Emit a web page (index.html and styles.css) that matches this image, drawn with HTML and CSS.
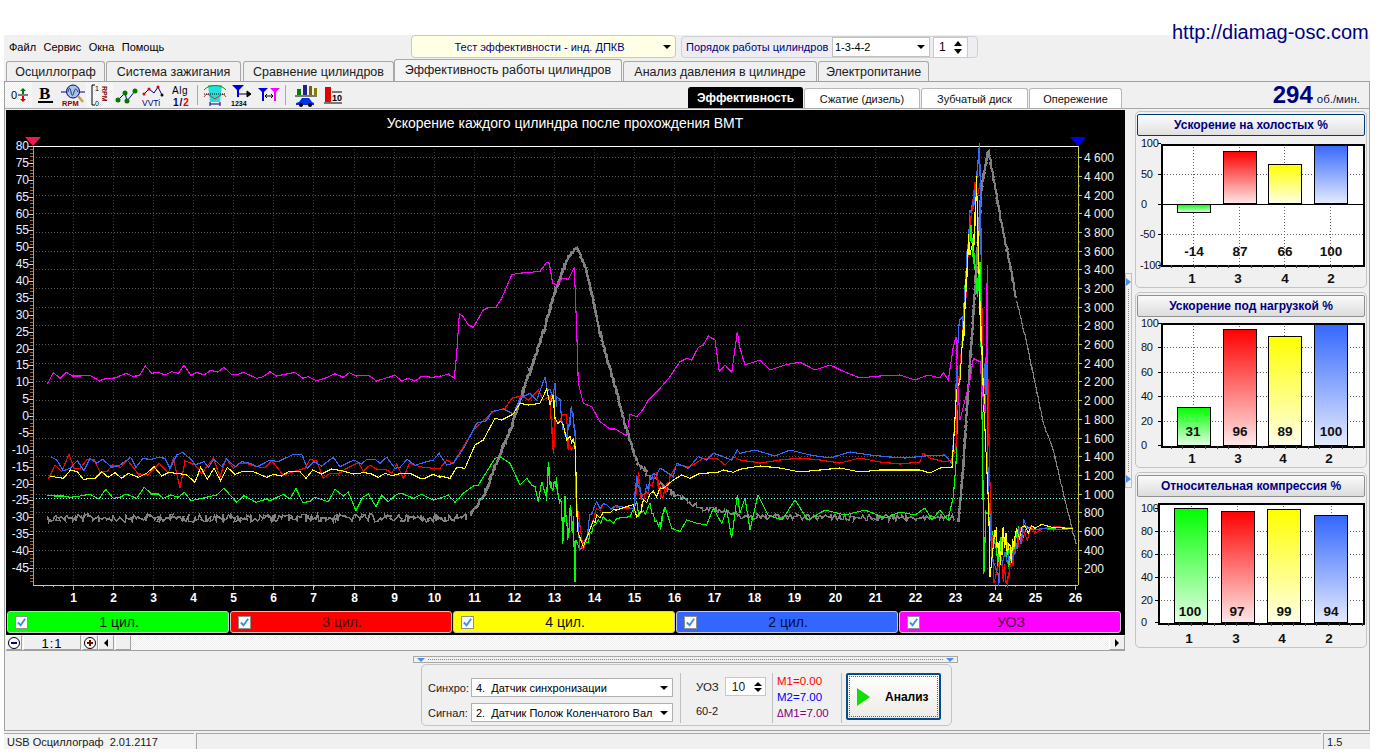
FILE: index.html
```html
<!DOCTYPE html>
<html lang="ru">
<head>
<meta charset="utf-8">
<title>USB Осциллограф</title>
<link rel="stylesheet" href="styles.css">
</head>
<body>
<div class="url">http://diamag-osc.com</div>
<div class="app">
  <div class="topbar">
    <nav class="menu"><span>Файл</span><span>Сервис</span><span>Окна</span><span>Помощь</span></nav>
    <div class="combo combo-test"><span class="combo-text">Тест эффективности - инд. ДПКВ</span><i class="caret"></i></div>
    <div class="order">
      <span class="order-label">Порядок работы цилиндров</span>
      <div class="combo combo-order"><span>1-3-4-2</span><i class="caret"></i></div>
      <div class="spin spin-order"><span>1</span><span class="spin-arrows"><i class="up"></i><i class="down"></i></span></div>
    </div>
  </div>
  <div class="tabs">
    <div class="tab t1">Осциллограф</div>
    <div class="tab t2">Система зажигания</div>
    <div class="tab t3">Сравнение цилиндров</div>
    <div class="tab t4 active">Эффективность работы цилиндров</div>
    <div class="tab t5">Анализ давления в цилиндре</div>
    <div class="tab t6">Электропитание</div>
  </div>
  <div class="panel">
    <div class="toolbar">
      <div class="tools">
        <button class="tool pressed"><svg viewBox="0 0 24 24"><text class="i-0" x="4" y="16">0</text><path d="M11 12h10" stroke="#000" fill="none"/><path d="M16 5l-3 3h2v3h2V8h2z" fill="#007a00"/><path d="M16 19l-3-3h2v-3h2v3h2z" fill="#e00000"/></svg></button>
        <button class="tool"><svg viewBox="0 0 24 24"><text class="i-b" x="5" y="16">B</text><rect x="4" y="18" width="15" height="2" fill="#000"/></svg></button>
        <button class="tool"><svg viewBox="0 0 24 24"><path d="M0 9h24" stroke="#000080" fill="none"/><circle cx="12" cy="8.500" r="6.500" fill="#a8c4e4" stroke="#000080"/><path d="M7 9c1-5 2-5 3 0s2 4 3 0 2-4 4 0" stroke="#203080" fill="none"/><path d="M17 13l5 6" stroke="#c8a050" stroke-width="2.500" fill="none"/><text class="i-rpm" x="1" y="23">RPM</text></svg></button>
        <button class="tool pressed"><svg viewBox="0 0 24 24"><path d="M7 2H4v20h3" stroke="#000" fill="none"/><text class="i-s" x="7" y="8">1</text><text class="i-s" x="7" y="23">0</text><text class="i-rpmv" transform="translate(14 3) rotate(90)">RPM</text></svg></button>
        <button class="tool"><svg viewBox="0 0 24 24"><path d="M3 17l7-7 2 8 8-10" stroke="#000080" fill="none"/><g fill="#007a00"><circle cx="3" cy="17" r="2.500"/><circle cx="10" cy="10" r="2.500"/><circle cx="12" cy="18" r="2.500"/><circle cx="20" cy="8" r="2.500"/></g></svg></button>
        <button class="tool"><svg viewBox="0 0 24 24"><path d="M2 11l5-5 5 4 4-6 4 8" stroke="#000080" fill="none"/><g fill="#e00000"><circle cx="2" cy="11" r="1.500"/><circle cx="7" cy="6" r="1.500"/><circle cx="16" cy="4" r="1.500"/></g><circle cx="20" cy="12" r="1.500" fill="#000"/><text class="i-vv" x="0" y="23">VVTi</text></svg></button>
        <button class="tool"><svg viewBox="0 0 24 24"><text class="i-alg" x="3" y="11">Alg</text><text class="i-frac" x="4" y="23">1/<tspan class="red">2</tspan></text></svg></button>
        <span class="tool-sep"></span>
        <button class="tool"><svg viewBox="0 0 24 24"><path d="M5 2h14l-2 17H7z" fill="#20e0e0"/><path d="M1 7c5-6 17-6 22 0" stroke="#00a000" fill="none"/><path d="M1 14c3-5 5-2 11 2 6-4 8-7 11-2" stroke="#e02020" fill="none"/><path d="M1 11h22" stroke="#000" stroke-dasharray="1 1" fill="none"/><path d="M7 21h10M7 19v4M17 19v4" stroke="#000080" fill="none"/></svg></button>
        <button class="tool"><svg viewBox="0 0 24 24"><path d="M2 2h12l-5 5v7H7V7z" fill="#0000e0"/><path d="M9 11h11M17 8l4 3-4 3z" stroke="#000" fill="#000"/><text class="i-num" x="1" y="23">1234</text></svg></button>
        <button class="tool"><svg viewBox="0 0 24 24"><path d="M1 5h10L7 9v9H5V9z" fill="#0000e0"/><path d="M13 5h10l-4 4v9h-2V9z" fill="#ff00ff"/><path d="M8 13h8M8 13l2-2M8 13l2 2M16 13l-2-2M16 13l-2 2" stroke="#000" fill="none"/></svg></button>
        <span class="tool-sep sep2"></span>
        <button class="tool"><svg viewBox="0 0 24 24"><rect x="3" y="6" width="4" height="6" fill="#008000"/><rect x="9" y="2" width="4" height="10" fill="#202090"/><rect x="15" y="3" width="3" height="9" fill="#806000"/><rect x="20" y="5" width="3" height="7" fill="#808000"/><path d="M1 13h22" stroke="#000" fill="none"/><path d="M2 20l3-1 3-4h7l3 4 2 1v2H2z" fill="#0030e0"/><circle cx="7" cy="22" r="2" fill="#000"/><circle cx="16" cy="22" r="2" fill="#000"/></svg></button>
        <button class="tool"><svg viewBox="0 0 24 24"><rect x="4" y="4" width="6" height="15" fill="#e00000"/><path d="M3 20h18M11 9h10" stroke="#000" fill="none"/><text class="i-ten" x="11" y="18">10</text></svg></button>
      </div>
      <div class="subtabs">
        <div class="subtab s1 active">Эффективность</div>
        <div class="subtab s2">Сжатие (дизель)</div>
        <div class="subtab s3">Зубчатый диск</div>
        <div class="subtab s4">Опережение</div>
      </div>
      <div class="rpm"><b>294</b><span>об./мин.</span></div>
    </div>
    <div class="work">
      <div class="scope-col">
        <div class="scope">
          <svg id="scope" class="scope-svg" width="1119" height="501" viewBox="6 110 1119 501"></svg>
          <div class="legend">
            <label class="leg green"><span class="chk"><svg viewBox="0 0 12 12"><path d="M2 6l3 3 5-7" stroke="#3a8ee6" stroke-width="2" fill="none"/></svg></span><span class="leg-t">1 цил.</span></label>
            <label class="leg red"><span class="chk"><svg viewBox="0 0 12 12"><path d="M2 6l3 3 5-7" stroke="#3a8ee6" stroke-width="2" fill="none"/></svg></span><span class="leg-t">3 цил.</span></label>
            <label class="leg yellow"><span class="chk"><svg viewBox="0 0 12 12"><path d="M2 6l3 3 5-7" stroke="#3a8ee6" stroke-width="2" fill="none"/></svg></span><span class="leg-t">4 цил.</span></label>
            <label class="leg blue"><span class="chk"><svg viewBox="0 0 12 12"><path d="M2 6l3 3 5-7" stroke="#3a8ee6" stroke-width="2" fill="none"/></svg></span><span class="leg-t">2 цил.</span></label>
            <label class="leg magenta"><span class="chk"><svg viewBox="0 0 12 12"><path d="M2 6l3 3 5-7" stroke="#3a8ee6" stroke-width="2" fill="none"/></svg></span><span class="leg-t">УОЗ</span></label>
          </div>
        </div>
        <div class="scrollrow">
          <span class="sb-btn"><svg viewBox="0 0 14 14"><circle cx="7" cy="7" r="5.500" fill="#fff" stroke="#000"/><path d="M4 7h6" stroke="#000080" stroke-width="2"/></svg></span>
          <span class="sb-scale">1:1</span>
          <span class="sb-btn"><svg viewBox="0 0 14 14"><circle cx="7" cy="7" r="5.500" fill="#fff" stroke="#000"/><path d="M4 7h6M7 4v6" stroke="#800000" stroke-width="2"/></svg></span>
          <span class="sb-btn"><i class="tri-l"></i></span>
          <span class="sb-btn sb-thumb"></span>
          <span class="sb-track"></span>
          <span class="sb-btn"><i class="tri-r"></i></span>
        </div>
      </div>
      <div class="vsplit"><i class="st st-r"></i><i class="vdots"></i><i class="st st-r"></i></div>
      <div class="side">
        <section class="card c1">
          <div class="card-title focus">Ускорение на холостых %</div>
          <svg id="bars1" class="bars"></svg>
        </section>
        <section class="card">
          <div class="card-title">Ускорение под нагрузкой %</div>
          <svg id="bars2" class="bars"></svg>
        </section>
        <section class="card">
          <div class="card-title">Относительная компрессия %</div>
          <svg id="bars3" class="bars"></svg>
        </section>
      </div>
    </div>
    <div class="bottom">
      <div class="hsplit"><i class="st st-d"></i><i class="hdots"></i><i class="st st-d"></i></div>
      <div class="group">
        <div class="sig">
          <div class="sig-row"><span class="sig-l">Синхро:</span><div class="combo combo-sig"><span>4.&nbsp; Датчик синхронизации</span><i class="caret"></i></div></div>
          <div class="sig-row"><span class="sig-l">Сигнал:</span><div class="combo combo-sig"><span>2.&nbsp; Датчик Полож Коленчатого Вал</span><i class="caret"></i></div></div>
        </div>
        <span class="gsep"></span>
        <div class="uoz">
          <div class="uoz-row"><span>УОЗ</span><div class="spin spin-uoz"><span>10</span><span class="spin-arrows"><i class="up"></i><i class="down"></i></span></div></div>
          <div class="uoz-note">60-2</div>
        </div>
        <span class="gsep"></span>
        <div class="marks">
          <div class="m-red">M1=0.00</div>
          <div class="m-blue">M2=7.00</div>
          <div class="m-pur"><small>Δ</small>M1=7.00</div>
        </div>
        <span class="gsep"></span>
        <button class="run"><i class="run-tri"></i><span>Анализ</span></button>
      </div>
    </div>
  </div>
  <div class="status">
    <div class="st-cell s-a">USB Осциллограф&nbsp; 2.01.2117</div>
    <div class="st-cell s-b"></div>
    <div class="st-cell s-c">1.5</div>
  </div>
</div>
<script src="chart.js"></script>
</body>
</html>
```
FILE: styles.css
```css
* { box-sizing: border-box; }
html, body { margin: 0; padding: 0; background: #fff; }
body { font: 12px "Liberation Sans", Arial, sans-serif; color: #000; overflow: hidden; }
i { display: block; }
button { font: inherit; margin: 0; padding: 0; }

.url { position: absolute; left: 1172px; top: 20px; font-size: 20px; line-height: 24px; color: #000080; }

.app { margin: 35px 0 0 4px; width: 1366px; height: 714px; background: #f0f0f0; }

/* top bar */
.topbar { height: 24px; display: flex; align-items: flex-start; }
.menu { width: 407px; height: 24px; padding-left: 5px; display: flex; align-items: center; font-size: 11px; gap: 7.500px; }
.combo { position: relative; display: flex; align-items: center; background: #fff; height: 19px; padding-left: 4px; overflow: hidden; white-space: nowrap; }
.caret { position: absolute; right: 4px; top: 50%; margin-top: -2px; width: 0; height: 0; border: 4px solid transparent; border-top-color: #000; border-bottom: 0; }
.combo-test { width: 265px; height: 23px; background: #ffffe6; border: 1px solid #c8c8c8; border-radius: 4px; justify-content: center; color: #000080; font-size: 11px; padding-right: 12px; }
.order { margin: 1px 0 0 5px; width: 297px; height: 22px; border: 1px solid #d0d0d0; border-radius: 4px; background: #eeeef2; display: flex; align-items: center; padding-left: 4px; }
.order-label { color: #000080; font-size: 11px; width: 146px; flex: none; }
.combo-order { width: 98px; height: 20px; border: 1px solid #c0c0c0; font-size: 11px; padding-left: 2px; }
.spin { display: flex; align-items: center; justify-content: space-between; background: #fff; border: 1px solid #c8c8c8; }
.spin-order { width: 35px; height: 21px; margin-left: 3px; padding: 0 5px; font-size: 12px; }
.spin-arrows { display: flex; flex-direction: column; gap: 3px; }
.up { width: 0; height: 0; border: 4px solid transparent; border-bottom: 5px solid #000; border-top: 0; }
.down { width: 0; height: 0; border: 4px solid transparent; border-top: 5px solid #000; border-bottom: 0; }

/* tabs */
.tabs { height: 22px; display: flex; align-items: flex-end; padding-left: 2px; gap: 1px; font-size: 12.500px; }
.tab { height: 20px; border: 1px solid #a8a8a8; border-bottom: 0; border-radius: 3px 3px 0 0; background: #f0f0f0; display: flex; align-items: center; justify-content: center; white-space: nowrap; color: #202020; }
.tab.active { height: 22px; background: #f4f4f4; padding-bottom: 2px; margin-left: -1px; }
.t1 { width: 99px; } .t2 { width: 135px; } .t3 { width: 151px; margin-left: 1px; }
.t4 { width: 228px; } .t5 { width: 194px; } .t6 { width: 111px; }

/* panel */
.panel { height: 650px; border: 1px solid #a0a0a0; display: flex; flex-direction: column; }
.toolbar { height: 27px; flex: none; display: flex; align-items: flex-end; border-bottom: 1px solid #a8a8a8; margin-bottom: 1px; }
.tools { width: 683px; height: 26px; display: flex; }
.tool { width: 27px; height: 25px; border: 0; background: #f0f0f0; display: flex; align-items: center; justify-content: center; }
.tool svg { width: 24px; height: 24px; display: block; }
.tool.pressed { background: repeating-conic-gradient(#fff 0 25%, #ececec 0 50%) 0 0 / 2px 2px; }
.tool-sep { width: 6px; flex: none; position: relative; margin-right: 1px; }
.tool-sep::after { content: ""; position: absolute; left: 3px; top: 3px; bottom: 3px; width: 1px; background: #a8a8a8; }
.sep2 { width: 9px; }
.i-0 { font-size: 11px; }
.i-b { font: bold 17px "Liberation Serif", serif; }
.i-rpm { font-size: 7.500px; font-weight: bold; fill: #900000; }
.i-s { font-size: 7px; }
.i-rpmv { font-size: 7px; font-weight: bold; fill: #800000; }
.i-vv { font-size: 8.500px; fill: #000080; }
.i-alg { font-size: 10px; letter-spacing: .5px; }
.i-frac { font-size: 10px; font-weight: bold; fill: #000080; letter-spacing: 1px; }
.red { fill: #e00000; }
.i-num { font-size: 7px; font-weight: bold; }
.i-ten { font-size: 9px; font-weight: bold; }

.subtabs { display: flex; height: 22px; align-items: flex-end; font-size: 11px; gap: 1px; }
.subtab { height: 20px; background: #fff; border: 1px solid #b8b8b8; border-bottom: 0; border-radius: 3px 3px 0 0; display: flex; align-items: center; justify-content: center; white-space: nowrap; color: #101010; }
.subtab.active { height: 21px; background: #000; color: #fff; font-weight: bold; border-color: #000; font-size: 12px; }
.s1 { width: 115px; } .s2 { width: 116px; } .s3 { width: 107px; } .s4 { width: 93px; }
.rpm { margin-left: auto; padding-right: 9px; display: flex; align-items: baseline; color: #000080; height: 26px; }
.rpm b { font-size: 24px; line-height: 26px; margin-right: 4px; }
.rpm span { font-size: 11.500px; color: #101050; }

/* work */
.work { height: 541px; flex: none; display: flex; }
.scope-col { width: 1119px; margin-left: 1px; flex: none; display: flex; flex-direction: column; }
.scope { height: 525px; background: #000; display: flex; flex-direction: column; }
.scope-svg { display: block; flex: none; }
.legend { display: flex; gap: 1px; padding-left: 1px; height: 22px; }
.leg { width: 222px; border: 1px solid #c8c8c8; border-radius: 3px; display: flex; align-items: center; position: relative; color: #101010; font-size: 14px; }
.green { background: #00ff00; } .red.leg { background: #ff0000; color: #500000; } .yellow { background: #ffff00; } .blue { background: #3366ff; color: #001040; } .magenta { background: #ff00ff; color: #400040; }
.chk { width: 13px; height: 13px; margin-left: 7px; background: #fff; border: 1px solid #909090; display: block; }
.chk svg { display: block; width: 11px; height: 11px; }
.leg-t { position: absolute; left: 0; right: 0; text-align: center; padding-left: 2px; }
.scrollrow { height: 16px; flex: none; display: flex; border-bottom: 1px solid #a0a0a0; }
.sb-btn { width: 16px; height: 15px; flex: none; background: #f0f0f0; border: 1px solid; border-color: #fff #a0a0a0 #a0a0a0 #fff; display: flex; align-items: center; justify-content: center; }
.sb-btn svg { width: 14px; height: 14px; display: block; }
.sb-scale { width: 58px; margin: 0 1px; background: #f0f0f0; border: 1px solid; border-color: #fff #a0a0a0 #a0a0a0 #fff; text-align: center; font-size: 13px; letter-spacing: 1px; line-height: 16px; }
.sb-thumb { margin-left: 1px; }
.sb-track { flex: 1; background: repeating-conic-gradient(#fff 0 25%, #ececec 0 50%) 0 0 / 2px 2px; }
.tri-l { width: 0; height: 0; border: 4px solid transparent; border-right: 4px solid #000; border-left: 0; }
.tri-r { width: 0; height: 0; border: 4px solid transparent; border-left: 4px solid #000; border-right: 0; }

.vsplit { width: 7px; margin: 0 3px 0 0; height: 215px; align-self: center; border: 1px solid #c0c0c0; display: flex; flex-direction: column; align-items: center; padding: 4px 0; justify-content: space-between; }
.vdots { flex: 1; width: 0; border-left: 1px dotted #4a90e8; margin: 3px 0; }
.st { width: 0; height: 0; flex: none; }
.st-r { border: 4px solid transparent; border-left: 5px solid #4a90e8; border-right: 0; }
.st-d { border: 4px solid transparent; border-top: 4px solid #4a90e8; border-bottom: 0; }

.side { width: 232px; flex: none; display: flex; flex-direction: column; gap: 4px; padding-top: 1px; }
.card { height: 176px; border: 1px solid #c4c4c4; border-radius: 5px; padding: 2px 1px 0; display: flex; flex-direction: column; }
.c1 { height: 177px; }
.card-title { height: 22px; flex: none; border: 1px solid #909090; border-radius: 2px; background: linear-gradient(#fafafa, #dcdcdc); color: #000080; font-weight: bold; font-size: 12px; display: flex; align-items: center; justify-content: center; }
.card-title.focus { border-color: #003c74; background: linear-gradient(#fcfcfc, #e0e0e0); }
.bars { display: block; flex: none; }
.b-tick { font-size: 11px; fill: #101010; letter-spacing: -.3px; }
.b-val { font-size: 13.500px; font-weight: bold; text-anchor: middle; fill: #101010; }
.b-cat { font-size: 13.500px; font-weight: bold; text-anchor: middle; fill: #101010; }

/* bottom */
.bottom { flex: 1; padding: 5px 0 0 408px; }
.hsplit { width: 545px; height: 7px; border: 1px solid #a8a8a8; display: flex; align-items: center; padding: 0 3px; }
.hdots { flex: 1; border-top: 1px dotted #4a90e8; margin: 0 3px; }
.group { width: 531px; height: 62px; margin: 1px 0 0 8px; border: 1px solid #c4c4c4; border-radius: 5px; display: flex; padding: 8px 0 0 6px; }
.gsep { width: 1px; height: 50px; background: #c0c0c0; flex: none; }
.sig { width: 245px; margin: 5px 7px 0 0; display: flex; flex-direction: column; gap: 6px; }
.sig-row { display: flex; align-items: center; height: 19px; font-size: 11px; }
.sig-l { width: 43px; color: #202020; }
.combo-sig { width: 202px; border: 1px solid #b0b0b0; font-size: 11px; padding-right: 18px; }
.uoz { width: 91px; padding: 4px 0 0 15px; font-size: 11.500px; color: #202020; }
.uoz-row { display: flex; align-items: center; justify-content: flex-start; gap: 6px; }
.spin-uoz { width: 41px; height: 19px; padding: 0 3px 0 6px; font-size: 12px; }
.spin-uoz .up, .spin-uoz .down { border-width: 4px; }
.spin-uoz .spin-arrows { gap: 2px; }
.uoz-note { margin-top: 9px; font-size: 11px; }
.marks { width: 68px; padding-left: 4px; font-size: 11.500px; line-height: 16px; }
.m-red { color: #ff0000; } .m-blue { color: #0000ff; } .m-pur { color: #800080; }
.m-pur small { font-size: 10px; }
.run { width: 95px; height: 47px; margin-left: 4px; border: 2px solid #0a4a84; border-radius: 2px; background: linear-gradient(#fff, #ecebe4); display: flex; align-items: center; position: relative; outline: 1px dotted #666; outline-offset: -4px; font-weight: bold; font-size: 12px; }
.run-tri { width: 0; height: 0; margin-left: 9px; border: 9px solid transparent; border-left: 13px solid #10e000; border-right: 0; }
.run span { margin-left: 15px; }

/* status */
.status { height: 16px; margin-top: 2px; display: flex; font-size: 11px; color: #202020; }
.st-cell { border-top: 1px solid #a8a8a8; border-left: 1px solid #a8a8a8; height: 16px; padding: 2px 0 0 3px; white-space: nowrap; }
.s-a { width: 190px; border-left: 0; background: #f4f4f4; }
.s-b { width: 1126px; margin-left: 2px; }
.s-c { width: 47px; margin-left: 2px; }

/* chart svg */
.scope-svg text { font-size: 12px; }
.scope-svg .t-title { fill: #fff; text-anchor: middle; font-size: 14px; }
.t-left { fill: #e8f0ff; text-anchor: end; }
.t-right { fill: #f0f0f0; }
.t-x { fill: #fff; font-weight: bold; text-anchor: middle; }
.gh { stroke: #585858; stroke-dasharray: 1 2; }
.gv { stroke: #383838; stroke-dasharray: 1 2; }
.curve { fill: none; stroke-linejoin: miter; }
.b-grid { stroke: #606060; stroke-dasharray: 1 2; }
```
FILE: chart.js
```js
(function () {
  var NS = 'http://www.w3.org/2000/svg';
  function el(tag, attrs, parent, text) {
    var n = document.createElementNS(NS, tag);
    for (var k in attrs) n.setAttribute(k, attrs[k]);
    if (text !== undefined) n.textContent = text;
    parent.appendChild(n);
    return n;
  }
  function line(p, x1, y1, x2, y2, attrs) {
    var a = { x1: x1, y1: y1, x2: x2, y2: y2 };
    for (var k in attrs) a[k] = attrs[k];
    return el('line', a, p);
  }
  // points traced from zoomed (3x) crops
  function Z(ox, oy, arr) {
    var out = [];
    for (var i = 0; i < arr.length; i += 2) out.push(ox + arr[i] / 3, oy + arr[i + 1] / 3);
    return out;
  }
  var seed = 12345;
  function rnd() { seed = (seed * 1103515245 + 12345) & 0x7fffffff; return seed / 0x7fffffff; }

  var svg = document.getElementById('scope');
  var X0 = 33, X1 = 1078, Y0 = 146, Y1 = 585;
  function xOf(n) { return 73 + 40.08 * (n - 1); }
  function yR(k) { return 157.3 + 18.68 * k; }

  el('text', { x: 565, y: 128, 'class': 't-title' }, svg, 'Ускорение каждого цилиндра после прохождения ВМТ');
  el('path', { d: 'M25 137h16l-8 9z', fill: '#f0184c' }, svg);
  el('path', { d: 'M1070 137h16l-8 9z', fill: '#0000f0' }, svg);

  var i, k;
  for (k = 0; k <= 22; k++) {
    var yy = Math.round(yR(k)) + 0.5;
    line(svg, X0, yy, X1, yy, { 'class': 'gh' });
    var v = 4600 - 200 * k;
    var lab = v >= 1000 ? Math.floor(v / 1000) + ' ' + String(v % 1000 + 1000).slice(1) : String(v);
    el('text', { x: 1084, y: yy + 4, 'class': 't-right' }, svg, lab);
    line(svg, X1, yy, X1 + 4, yy, { stroke: '#c8c840' });
    if (k < 22) line(svg, X1, yy + 9.34, X1 + 2, yy + 9.34, { stroke: '#908840' });
  }
  for (i = 1; i <= 26; i++) {
    var xx = Math.round(xOf(i)) + 0.5;
    line(svg, xx, Y0, xx, Y1, { 'class': 'gv' });
    el('text', { x: xx, y: 602, 'class': 't-x' }, svg, String(i));
    line(svg, xx, Y1, xx, Y1 + 5, { stroke: '#c0c0c0' });
  }
  for (var tx = 43; tx < X1; tx += 10.02) line(svg, Math.round(tx) + 0.5, Y1, Math.round(tx) + 0.5, Y1 + 2, { stroke: '#a0a0a0' });

  for (var val = 80; val >= -45; val -= 5) {
    var ly = 416 - val * 3.375;
    el('text', { x: 29, y: Math.round(ly) + 4, 'class': 't-left' }, svg, String(val));
    line(svg, X0 - 5, Math.round(ly) + 0.5, X0, Math.round(ly) + 0.5, { stroke: '#d0d0d0' });
  }
  for (val = 80; val >= -50; val--) {
    if (val % 5 === 0) continue;
    var my = Math.round(416 - val * 3.375) + 0.5;
    line(svg, X0 - 3, my, X0, my, { stroke: '#a06838' });
  }
  line(svg, X0 + 0.5, Y0, X0 + 0.5, Y1, { stroke: '#48c8a8' });
  line(svg, X1 + 0.5, Y0, X1 + 0.5, Y1, { stroke: '#c8c840' });
  line(svg, X0, Y0 + 0.5, X1, Y0 + 0.5, { stroke: '#ffffff' });
  line(svg, X0, Y1 + 0.5, X1, Y1 + 0.5, { stroke: '#c8c8c8' });

  function poly(pts, color, w) {
    el('polyline', { points: pts.map(function (n) { return n.toFixed(1); }).join(' '), 'class': 'curve', stroke: color, 'stroke-width': w, 'shape-rendering': 'crispEdges' }, svg);
  }
  function jitter(anchors, step, amp) {
    var out = [];
    for (var a = 0; a + 3 < anchors.length; a += 2) {
      var x0 = anchors[a], y0 = anchors[a + 1], x1 = anchors[a + 2], y1 = anchors[a + 3];
      var n = Math.max(1, Math.round(Math.hypot(x1 - x0, y1 - y0) / step));
      for (var s = 0; s < n; s++) {
        var t = s / n;
        out.push(x0 + (x1 - x0) * t + (rnd() - 0.5) * amp * 0.5, y0 + (y1 - y0) * t + (rnd() - 0.5) * amp);
      }
    }
    return out;
  }
  // adds fine vertical scatter to the parts of a curve inside the given x ranges
  function scatter(pts, ranges) {
    var out = [];
    for (var a = 0; a + 3 < pts.length; a += 2) {
      var x0 = pts[a], y0 = pts[a + 1], x1 = pts[a + 2], y1 = pts[a + 3];
      var hit = null;
      ranges.forEach(function (r) { if (x0 >= r[0] && x0 <= r[1]) hit = r; });
      if (!hit) { out.push(x0, y0); continue; }
      var n = Math.max(1, Math.round(Math.hypot(x1 - x0, y1 - y0) / 4));
      for (var s = 0; s < n; s++) {
        var t = s / n, sign = s % 2 ? 1 : -1;
        out.push(x0 + (x1 - x0) * t, y0 + (y1 - y0) * t + sign * rnd() * hit[2]);
      }
    }
    out.push(pts[pts.length - 2], pts[pts.length - 1]);
    return out;
  }
  var NOISY = [[545, 574, 8], [584, 612, 4], [633, 662, 6], [962, 985, 12], [995, 1026, 12]];

  // grey (rpm) curve
  poly(jitter([47, 518, 250, 518, 460, 518, 468, 516], 1.3, 8), '#808080', 1.5);
  poly(jitter(Z(440, 230, [90, 855, 130, 800, 170, 700, 215, 590, 260, 450, 300, 340, 340, 200, 380, 90, 410, 50]), 1.6, 3), '#808080', 2.6);
  poly(jitter(Z(440, 230, [410, 50, 440, 120, 480, 310, 520, 450, 550, 565, 590, 695]), 1.6, 2.5), '#808080', 2.4);
  poly(jitter(Z(440, 230, [590, 695, 625, 735, 660, 760, 700, 795, 750, 820, 790, 835, 830, 840, 880, 850, 900, 858]).concat([760, 517, 955, 518]), 1.5, 6), '#808080', 1.5);
  poly(jitter(Z(920, 130, [115, 1175, 125, 1075, 140, 850, 155, 630, 170, 400, 185, 170, 205, 60]), 1.6, 2), '#808080', 2.4);
  poly(jitter(Z(920, 130, [205, 60, 225, 170, 240, 260, 265, 380, 290, 510]), 1.6, 2), '#808080', 2.2);
  poly(jitter(Z(920, 130, [290, 510, 320, 640, 345, 760, 370, 880, 400, 960, 430, 1090, 450, 1170, 470, 1250]), 2, 1), '#808080', 1.2);

  var green = Z(0, 360, [142,406,165,408,190,408,210,412,240,408,270,403,297,417,317,388,340,415,360,412,378,402,410,415,432,382,455,402,475,402,490,415,512,405,535,412,553,397,573,422,610,414,650,405,672,385,710,427,732,407,768,427,800,417,810,422,850,403,870,417,888,385,908,428,930,424,945,412,985,425,1005,388,1030,408,1045,396,1068,452,1088,412,1105,402,1128,440,1145,405,1165,425,1190,403,1205,400,1240,415,1265,403,1300,420])
    .concat(Z(440, 230, [0,805,25,795,45,817,70,790,100,768,115,765,140,725,165,685,180,680,210,700,240,765,260,745,275,765,285,770,295,815,305,755,320,815,325,705,335,790,350,750,355,800,365,830,368,940,375,820,385,920,392,830,395,900,400,880,405,1055,408,930,420,960,440,940,460,890,490,860,510,880,530,865,570,860,590,830,610,860,630,835,660,895,675,830,695,895,720,905,740,870,770,880,800,885,820,835,845,880,860,840,875,925,892,795,900,850]))
    .concat([745,498,750,530,758,495,768,515,782,520,795,500,808,520,825,510,845,515,865,510,885,518,900,512,915,515,925,508,932,520,940,510,948,520])
    .concat(Z(920, 130, [100,1100,108,1000,115,790,125,660,135,500,150,290,165,410,172,490,180,420,188,1000,192,1325,198,1150,205,1150,215,1200,230,1290,250,1220,270,1290,295,1195,320,1190,345,1200,380,1195,458,1192]));
  var blue = Z(0, 360, [152,290,170,300,190,332,210,325,232,302,252,332,270,295,290,310,308,298,335,322,360,315,392,292,408,322,428,296,455,298,475,292,495,295,510,325,530,285,548,277,575,300,585,315,612,305,625,322,642,298,665,320,680,297,705,320,725,305,750,310,772,320,810,300,835,305,880,283,905,283,922,325,942,305,965,318,1000,292,1020,320,1062,300,1085,312,1100,298,1125,298,1140,310,1160,292,1185,325,1200,322,1222,298,1245,316,1270,308,1300,300,1318,280])
    .concat(Z(440, 230, [0,675,20,705,40,700,75,648,110,580,140,572,155,545,190,537,220,552,240,505,270,490,290,510,315,465,330,490,345,475,350,520,360,520,365,570,380,630,395,545,405,600,408,800,420,960,440,930,450,855,470,825,500,825,540,830,580,845,590,755,610,800,640,735,670,720,700,740,710,700,745,715,775,680,800,690,820,670,850,680,875,690,892,660,900,670]))
    .concat([755,450,775,456,790,450,810,455,830,458,850,452,870,455,890,457,905,458,925,456,945,455])
    .concat(Z(920, 130, [95,1000,105,870,110,700,118,570,128,590,132,540,140,420,150,250,165,200,178,55,182,170,184,500,186,780,200,700,205,1100,210,1150,215,1280,235,1365,240,1290,255,1280,270,1260,285,1280,295,1215,320,1195,345,1200,370,1195,400,1200,440,1198,458,1192]));
  var red = Z(0, 360, [145,358,165,315,185,335,207,283,222,325,240,325,262,298,282,298,300,337,320,335,338,315,362,322,382,300,415,342,445,343,478,310,505,340,520,295,540,385,555,302,585,315,605,340,640,295,660,350,678,295,700,325,720,310,740,310,770,320,795,323,815,303,850,345,880,335,915,325,930,298,950,303,970,355,990,340,1015,342,1040,325,1075,308,1090,333,1110,315,1130,328,1160,330,1175,340,1190,312,1210,355,1228,310,1245,316,1270,322,1300,325])
    .concat(Z(440, 230, [0,715,20,690,40,700,70,650,100,600,125,577,160,545,195,535,215,505,245,497,265,510,295,480,310,510,330,510,340,670,345,580,380,565,385,660,405,640,408,800,430,960,460,870,470,840,500,830,540,835,580,840,595,740,605,810,630,770,650,740,665,810,690,740,710,705,750,710,790,685,830,685,855,705,880,680,900,690]))
    .concat([760,463,780,460,800,458,820,460,840,463,860,458,880,462,900,464,920,462,923,453,930,458,945,462,952,460])
    .concat(Z(920, 130, [108,950,112,800,125,650,135,530,150,280,165,180,180,165,185,500,190,780,205,750,208,1000,213,1150,222,1360,240,1290,260,1360,275,1290,290,1250,310,1205,345,1210,370,1195,410,1190,458,1195]));
  var yellow = Z(0, 360, [150,348,170,352,190,355,212,330,232,335,250,358,285,355,305,335,325,352,345,338,365,355,385,340,415,352,440,340,462,320,485,348,505,338,535,340,560,345,585,367,602,322,622,358,642,325,662,362,682,322,705,343,725,335,760,335,800,352,820,343,845,348,865,335,900,335,918,355,938,330,965,342,995,327,1025,332,1060,342,1090,338,1110,340,1135,352,1155,340,1175,347,1205,340,1230,340,1260,355,1275,355,1298,343,1320,352])
    .concat(Z(440, 230, [0,738,30,745,50,712,75,715,105,645,130,630,165,565,185,570,220,552,240,520,265,525,300,520,320,490,340,510,345,570,370,600,390,620,405,650,408,730,410,800,412,900,430,950,460,880,470,860,500,850,530,840,580,840,600,860,610,810,640,790,670,775,700,750,725,735,750,745,780,730,830,728,850,720,880,727,900,718]))
    .concat([760,466,780,468,800,472,820,470,840,468,860,472,880,470,900,470,920,470,930,473,940,468,952,467])
    .concat(Z(920, 130, [100,950,110,780,120,750,130,620,145,340,160,370,170,160,180,540,190,780,195,900,200,1010,206,1130,210,1340,225,1200,240,1280,250,1220,270,1280,290,1220,315,1188,345,1195,365,1183,400,1193,458,1195]));
  var magenta = Z(0, 360, [142,72,160,38,180,55,198,37,218,48,240,48,270,46,298,62,320,55,345,54,378,40,398,49,418,47,436,18,455,40,475,37,495,45,515,35,535,40,552,15,573,46,590,37,612,45,632,31,653,36,672,22,695,44,712,44,730,37,770,55,790,50,810,35,830,48,860,42,885,37,908,55,925,50,950,62,975,55,1005,41,1030,52,1048,38,1068,48,1105,46,1130,63,1155,55,1185,46,1205,63,1225,55,1245,63,1265,49,1300,52,1320,48])
    .concat(Z(440, 230, [0,440,25,432,43,445,50,370,58,252,70,260,85,285,100,292,130,240,145,233,168,232,185,205,215,135,232,130,260,128,300,124,320,97,328,100,338,160,350,165,368,145,385,148,403,112,410,300,415,460,430,520,455,530,480,575,510,597,525,597,560,617,570,553,590,560,608,540,625,510,660,475,690,440,720,395,740,385,755,390,775,352,790,345,805,318,825,330,838,425,855,405,875,428,892,305,900,355]))
    .concat([745,365,760,360,770,370,785,365,800,362,815,370,830,365,845,372,860,378,880,376,900,375,915,380,928,375,940,378])
    .concat(Z(920, 130, [70,727,85,750,100,650,108,620,112,740,120,870,135,810,150,750,160,685,180,695,190,810,196,850,202,405,203,860]));

  poly(scatter(green, NOISY), '#00ff00', 1.1);
  // cursor level on the 1 000 rpm mark
  line(svg, X0, 498.5, X1, 498.5, { stroke: '#60ffff', 'stroke-dasharray': '1 2' });
  poly(scatter(red, NOISY), '#ff0000', 1.15);
  poly(scatter(blue, NOISY), '#3366ff', 1.15);
  poly(scatter(yellow, NOISY), '#ffff00', 1.1);
  poly(magenta, '#ff00ff', 1.1);

  // side bar charts
  var COLORS = [['#00ff00', '#e4ffe4'], ['#ff0000', '#ffe8e8'], ['#ffff00', '#ffffe8'], ['#3366ff', '#e4ebff']];
  function bars(id, c) {
    var s = document.getElementById(id);
    s.setAttribute('width', 228);
    s.setAttribute('height', c.h);
    s.setAttribute('viewBox', '1137 ' + c.y0 + ' 228 ' + c.h);
    var defs = el('defs', {}, s);
    COLORS.forEach(function (col, n) {
      var g = el('linearGradient', { id: id + 'g' + n, x1: 0, y1: 0, x2: 0, y2: 1 }, defs);
      el('stop', { offset: 0, 'stop-color': col[0] }, g);
      el('stop', { offset: 1, 'stop-color': col[1] }, g);
    });
    var px0 = c.plot[0], py0 = c.plot[1], px1 = c.plot[2], py1 = c.plot[3];
    el('rect', { x: px0, y: py0, width: px1 - px0, height: py1 - py0, fill: '#fff' }, s);
    c.grid.forEach(function (gy) { line(s, px0, gy + 0.5, px1, gy + 0.5, { 'class': 'b-grid' }); });
    c.vgrid.forEach(function (gx) { line(s, gx + 0.5, py0, gx + 0.5, py1, { 'class': 'b-grid' }); });
    c.bars.forEach(function (b, n) {
      el('rect', { x: b[0] + 0.5, y: b[1] + 0.5, width: b[2] - b[0], height: b[3] - b[1], fill: 'url(#' + id + 'g' + n + ')', stroke: '#000' }, s);
    });
    if (c.zero) line(s, px0, c.zero + 0.5, px1, c.zero + 0.5, { stroke: '#000' });
    el('rect', { x: px0 + 0.5, y: py0 + 0.5, width: px1 - px0, height: py1 - py0, fill: 'none', stroke: '#000', 'stroke-width': 2, 'shape-rendering': 'crispEdges' }, s);
    for (var t = px0 + 10; t < px1; t += 11.4) line(s, Math.round(t) + 0.5, py1, Math.round(t) + 0.5, py1 + 3, { stroke: '#404040' });
    c.ticks.forEach(function (t) {
      el('text', { x: 1141 - (t[0].charAt(0) === '-' ? 1 : 0), y: t[1] + 4, 'class': 'b-tick' }, s, t[0]);
      line(s, px0 - 3, t[1] + 0.5, px0, t[1] + 0.5, { stroke: '#000' });
    });
    c.vals.forEach(function (v) { el('text', { x: v[1], y: c.valY, 'class': 'b-val' }, s, v[0]); });
    c.cats.forEach(function (v) { el('text', { x: v[1], y: c.catY, 'class': 'b-cat' }, s, v[0]); });
  }
  bars('bars1', {
    y0: 136, h: 150, plot: [1161, 144, 1363, 265], zero: 204,
    grid: [174, 234], vgrid: [1193, 1239, 1284, 1330],
    bars: [[1177, 204, 1210, 212], [1223, 151, 1256, 203], [1268, 164, 1301, 203], [1314, 144, 1347, 203]],
    ticks: [['100', 143], ['50', 174], ['0', 204], ['-50', 234], ['-100', 265]],
    vals: [['-14', 1194], ['87', 1240], ['66', 1285], ['100', 1331]], valY: 256,
    cats: [['1', 1192], ['3', 1238], ['4', 1285], ['2', 1331]], catY: 283
  });
  bars('bars2', {
    y0: 317, h: 149, plot: [1161, 323, 1363, 446],
    grid: [347, 372, 396, 421], vgrid: [1193, 1239, 1284, 1330],
    bars: [[1177, 407, 1210, 445], [1223, 329, 1256, 445], [1268, 336, 1301, 445], [1314, 323, 1347, 445]],
    ticks: [['100', 323], ['80', 347], ['60', 372], ['40', 396], ['20', 421], ['0', 445]],
    vals: [['31', 1193], ['96', 1240], ['89', 1285], ['100', 1331]], valY: 436,
    cats: [['1', 1192], ['3', 1238], ['4', 1283], ['2', 1329]], catY: 463
  });
  bars('bars3', {
    y0: 497, h: 149, plot: [1158, 503, 1363, 623],
    grid: [531, 554, 577, 600], vgrid: [1191, 1237, 1283, 1331],
    bars: [[1174, 508, 1207, 622], [1221, 511, 1254, 622], [1267, 509, 1300, 622], [1314, 515, 1347, 622]],
    ticks: [['100', 508], ['80', 531], ['60', 554], ['40', 577], ['20', 600], ['0', 622]],
    vals: [['100', 1190], ['97', 1237], ['99', 1284], ['94', 1331]], valY: 616,
    cats: [['1', 1189], ['3', 1236], ['4', 1282], ['2', 1329]], catY: 643
  });
})();
```
